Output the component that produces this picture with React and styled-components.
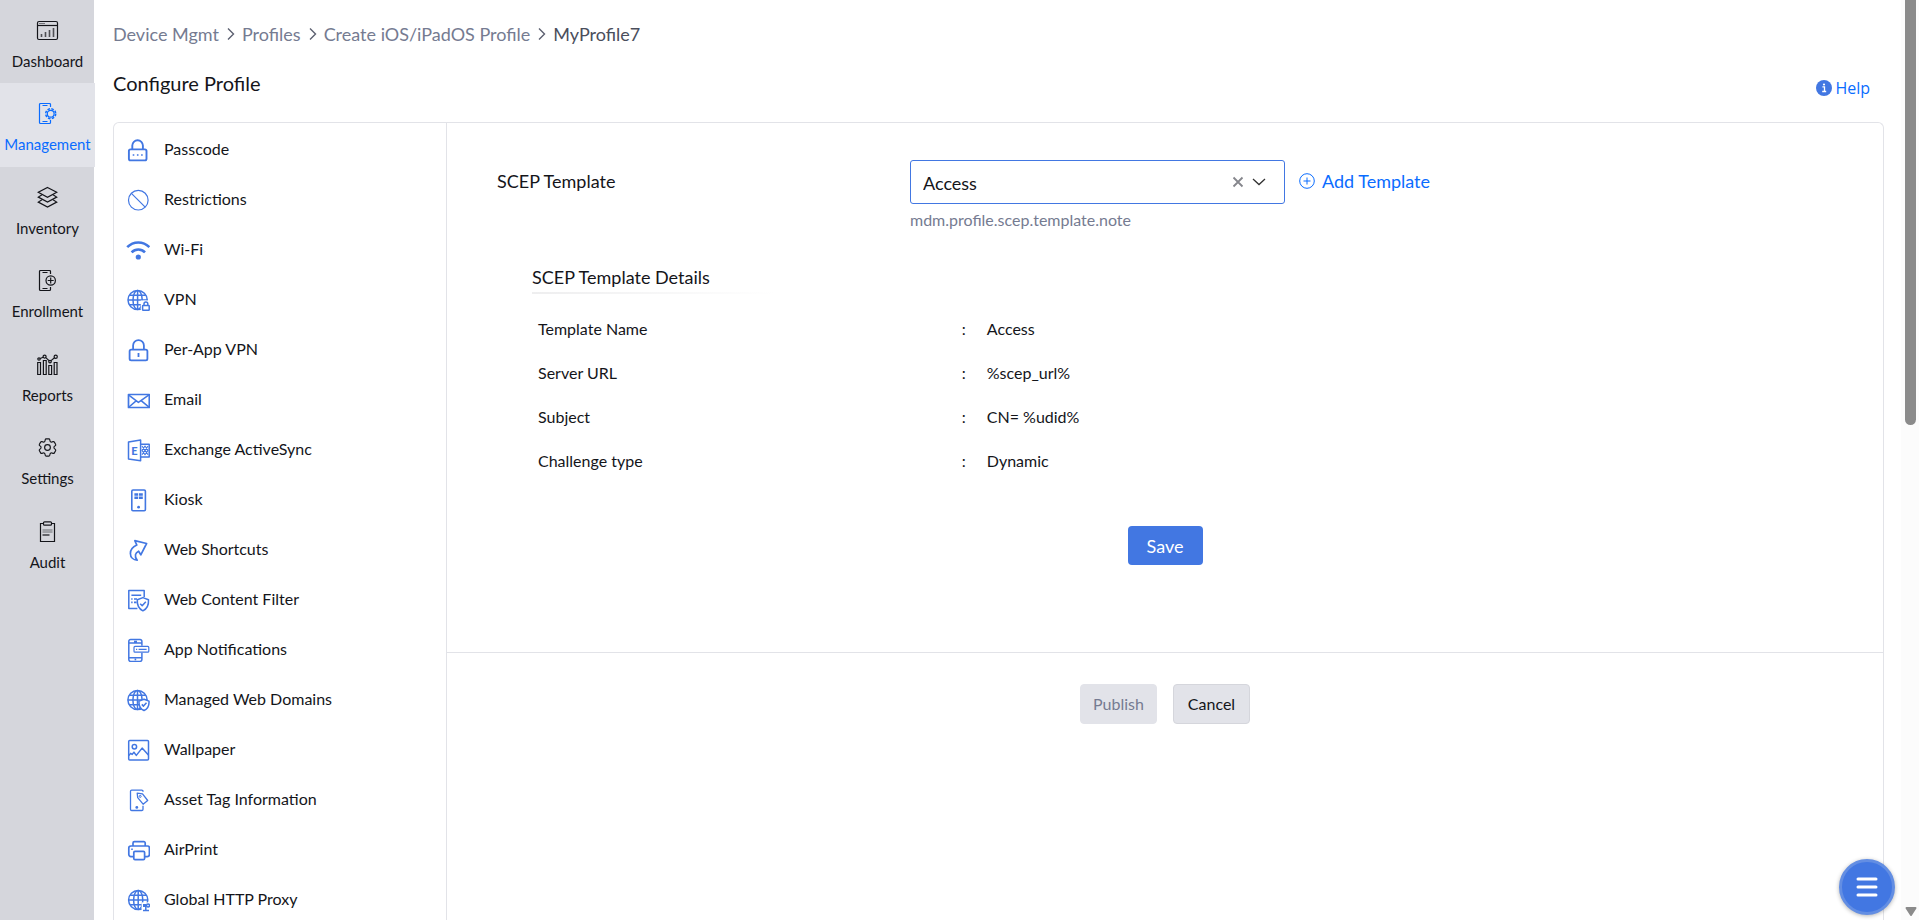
import React, { useState } from "react";
import styled, { createGlobalStyle, css } from "styled-components";
import { HiOutlineCog6Tooth } from "react-icons/hi2";

const color = {
  text: "#14151a",
  muted: "#757b91",
  link: "#0a6cff",
  brand: "#4277e2",
  rail: "#d5d6dc",
  railActive: "#e2e3e9",
  line: "#e2e3e8",
};

const GlobalStyle = createGlobalStyle`
  *, *::before, *::after { box-sizing: border-box; }
  html, body { margin: 0; background: #fff; }
  body {
    font-family: Lato, "Liberation Sans", sans-serif;
    font-size: 16px;
    line-height: 24px;
    color: ${color.text};
  }
  button, select { font: inherit; color: inherit; }
  ul, ol { list-style: none; margin: 0; padding: 0; }
  a { color: inherit; text-decoration: none; }
`;

const Shell = styled.div`
  display: flex;
  height: 100vh;
  overflow: hidden;
`;

/* ---------- left rail ---------- */

const Rail = styled.nav`
  flex: none;
  width: 94px;
  background: ${color.rail};
`;

const RailList = styled.ul`
  display: flex;
  flex-direction: column;
  width: 95px;
  height: 584px;
`;

const RailItem = styled.li`
  flex: 1;
  display: flex;
`;

const RailLink = styled.a`
  flex: 1;
  display: flex;
  flex-direction: column;
  align-items: center;
  gap: 7px;
  padding-top: 19px;
  font-size: 15px;
  ${(p) =>
    p.$active &&
    css`
      background: ${color.railActive};
      color: ${color.link};
    `}
`;

const RailIcon = styled.svg.attrs({ viewBox: "0 0 23 23", "aria-hidden": true })`
  flex: none;
  width: 23px;
  height: 23px;
  fill: none;
  stroke: currentColor;
  stroke-width: 1.2;
`;

const RailGear = styled(HiOutlineCog6Tooth)`
  flex: none;
  width: 23px;
  height: 23px;
  & path { stroke-width: 1.2; }
`;

/* ---------- page ---------- */

const Page = styled.main`
  flex: 1;
  min-width: 0;
  display: flex;
  flex-direction: column;
  padding: 20px 17px 0 19px;
`;

const Breadcrumb = styled.ol`
  display: flex;
  align-items: center;
  gap: 7px;
  height: 27px;
  font-size: 18px;
  color: ${color.muted};
`;

const Crumb = styled.li`
  display: flex;
  align-items: center;
  gap: 7px;
  color: ${(p) => (p.$current ? "#4a4e5c" : "inherit")};
`;

const CrumbArrow = styled.svg`
  width: 9px;
  height: 14px;
  fill: none;
  stroke: #5c6070;
  stroke-width: 1.4;
`;

const TitleRow = styled.header`
  display: flex;
  justify-content: space-between;
  padding: 22px 14px 0 0;
  height: 75px;
`;

const Title = styled.h1`
  margin: 0;
  font-size: 20px;
  line-height: 28px;
  font-weight: 400;
`;

const HelpLink = styled.a`
  display: flex;
  align-items: center;
  gap: 3px;
  height: 38px;
  color: ${color.link};
  font-family: "Open Sans", sans-serif;
`;

const Panel = styled.div`
  flex: 1;
  min-height: 0;
  display: flex;
  border: 1px solid ${color.line};
  border-bottom: 0;
  border-radius: 6px 6px 0 0;
  overflow: hidden;
`;

const PolicyList = styled.ul`
  flex: none;
  width: 333px;
  padding-top: 2px;
  border-right: 1px solid ${color.line};
`;

const PolicyLink = styled.a`
  display: flex;
  align-items: center;
  gap: 14px;
  height: 50px;
  padding-left: 12px;
`;

const PolicyName = styled.span`
  padding-bottom: 2px;
`;

const PolicyIcon = styled.svg.attrs({ viewBox: "0 0 24 24", "aria-hidden": true })`
  flex: none;
  width: 24px;
  height: 24px;
  fill: none;
  stroke: ${color.brand};
  stroke-width: 1.5;
  stroke-linejoin: round;
  & .solid { fill: ${color.brand}; stroke: none; }
  & .cover { fill: #fff; }
`;

const Content = styled.section`
  flex: 1;
  min-width: 0;
`;

const FormArea = styled.form`
  display: flex;
  flex-direction: column;
  height: 530px;
  padding: 37px 0 0 50px;
  border-bottom: 1px solid ${color.line};
`;

const FieldRow = styled.div`
  display: grid;
  grid-template-columns: 413fr 973fr;
`;

const FieldLabel = styled.label`
  padding-top: 9px;
  font-size: 18px;
`;

const FieldLine = styled.div`
  display: flex;
  align-items: center;
  gap: 14px;
`;

const SelectBox = styled.div`
  position: relative;
  width: 375px;
`;

const Select = styled.select`
  appearance: none;
  width: 100%;
  height: 44px;
  padding: 2px 64px 0 12px;
  border: 1px solid ${color.brand};
  border-radius: 3px;
  background: #fff;
  font-size: 18px;
  outline: 0;
`;

const SelectTools = styled.div`
  position: absolute;
  top: 0;
  right: 19px;
  height: 44px;
  display: flex;
  align-items: center;
  gap: 8px;
  pointer-events: none;
`;

const ClearButton = styled.button`
  display: flex;
  padding: 0;
  border: 0;
  background: none;
  color: #85868c;
  pointer-events: auto;
  cursor: pointer;
`;

const AddTemplate = styled.button`
  display: flex;
  align-items: center;
  gap: 7px;
  padding: 0 0 2px;
  border: 0;
  background: none;
  font-size: 18px;
  line-height: 24px;
  color: ${color.link};
  cursor: pointer;
`;

const Note = styled.p`
  margin: 4px 0 0;
  color: ${color.muted};
`;

const Details = styled.section`
  padding: 33px 0 0 35px;
`;

const DetailsTitle = styled.h2`
  margin: 0;
  font-size: 18px;
  line-height: 24px;
  font-weight: 400;
`;

const DetailsRule = styled.div`
  width: 244px;
  height: 2px;
  margin: 3px 0 13px;
  background: linear-gradient(to right, #eeeeef, #fff);
`;

const DetailsTable = styled.table`
  width: 100%;
  border-collapse: collapse;
  table-layout: fixed;
  & th, & td {
    height: 44px;
    padding: 0 0 0 6px;
    font-weight: 400;
    text-align: left;
  }
  & th { width: 31%; }
  & td { padding-left: 11px; }
  & td::before { content: ":"; display: inline-block; width: 25px; }
`;

const Button = styled.button`
  height: 40px;
  border-radius: 4px;
  cursor: pointer;
  ${(p) =>
    p.$primary
      ? css`
          width: 75px;
          height: 39px;
          padding: 0;
          border: 0;
          background: ${color.brand};
          color: #fff;
          font-size: 18px;
        `
      : css`
          width: 77px;
          padding: 0;
          border: 1px solid #d5d6dc;
          background: #e2e3e9;
        `}
  &:disabled {
    border-color: #e2e3e9;
    color: ${color.muted};
    cursor: default;
  }
`;

const ButtonRow = styled.div`
  display: flex;
  justify-content: center;
  gap: 16px;
  padding-top: ${(p) => p.$top}px;
`;

const SaveRow = styled(ButtonRow)`
  margin-left: -50px;
`;

/* ---------- scroll track and floating menu ---------- */

const Track = styled.div`
  flex: none;
  width: 18px;
  display: flex;
  flex-direction: column;
  align-items: center;
  justify-content: space-between;
  padding: 0 3px 3px 4px;
  background: #fcfcfc;
`;

const Thumb = styled.div`
  width: 11px;
  height: 46.3%;
  border-radius: 0 0 6px 6px;
  background: #8b8b8b;
`;

const MenuButton = styled.button`
  position: fixed;
  right: 24px;
  bottom: 5px;
  width: 56px;
  height: 56px;
  display: flex;
  align-items: center;
  justify-content: center;
  padding: 0;
  border: 3px solid #638ee3;
  border-radius: 50%;
  background: ${color.brand};
  box-shadow: 0 1px 4px rgba(0, 0, 0, 0.3);
  cursor: pointer;
`;

const phone = "M14.5 5V2.5a1 1 0 0 0-1-1h-9a1 1 0 0 0-1 1v18a1 1 0 0 0 1 1h9a1 1 0 0 0 1-1V18M6.5 3.5h5M6.5 19.5h5";

const rail = [
  {
    label: "Dashboard",
    icon: (
      <>
        <rect x="1.5" y="2.5" width="20" height="18" rx="1.5" />
        <path d="M1.5 6.5h20" />
        <path d="M3.5 4.5h1M5.5 4.5h1M7.5 4.5h1" />
        <path d="M5.5 18v-3M9.5 18v-5M13.5 18v-7M17.5 18v-9" strokeWidth="1.6" opacity=".7" />
      </>
    ),
  },
  {
    label: "Management",
    icon: (
      <>
        <path d={phone} />
        <circle cx="14.7" cy="11.7" r="3.4" />
        <circle cx="14.7" cy="11.7" r="5" strokeWidth="1.5" strokeDasharray="2.6 1.33" />
      </>
    ),
  },
  {
    label: "Inventory",
    icon: (
      <>
        <path d="M11.5 1.5l9.2 4.8-9.2 4.9-9.2-4.9z" />
        <path d="M17 8.8l3.7 2.3-9.2 5-9.2-5L6 8.8" />
        <path d="M17 13.8l3.7 2.3-9.2 5-9.2-5L6 13.8" />
      </>
    ),
  },
  {
    label: "Enrollment",
    icon: (
      <>
        <path d={phone} />
        <circle cx="14.7" cy="11.5" r="4.7" />
        <path d="M14.7 8.5v6M11.7 11.5h6" />
      </>
    ),
  },
  {
    label: "Reports",
    icon: (
      <>
        <path d="M1.7 9.5h2.8v12H1.7zM7.4 7.5h2.8v14H7.4zM12.8 12.5h2.8v9h-2.8zM18.2 9.5H21v12h-2.8z" />
        <circle cx="3" cy="6" r="1.2" />
        <circle cx="8.6" cy="3.6" r="1.5" />
        <circle cx="14" cy="8.6" r="1.3" />
        <circle cx="19.7" cy="3.8" r="1.6" />
        <path d="M4.1 5.5l3.1-1.3M9.8 4.6l3.2 3M15 7.6l3.5-2.8" />
      </>
    ),
  },
  { label: "Settings", gear: true },
  {
    label: "Audit",
    icon: (
      <>
        <path d="M7.5 3.5h-3v18h14v-18h-3" />
        <rect x="7.5" y="1.8" width="8" height="3.4" rx="1" />
        <path d="M6.5 10h10M6.5 12h10" opacity=".55" />
        <path d="M6.5 15h7" />
      </>
    ),
  },
];

const Globe = ({ cx, r = 9.6 }) => (
  <>
    <circle cx={cx} cy="12" r={r} />
    <ellipse cx={cx} cy="12" rx="4.6" ry={r} />
    <path
      d={`M${cx} ${12 - r}v${2 * r}M${cx - r} 12h${2 * r}M${cx - 8} 7.2h16M${cx - 8} 16.8h16`}
    />
  </>
);

const policies = [
  ["Passcode", (
    <>
      <rect x="2.9" y="11.4" width="17.6" height="11" rx="1.6" strokeWidth="1.9" />
      <path d="M6.3 11V7.6a5.2 5.2 0 0 1 10.6 0V11" strokeWidth="1.9" />
      <path d="M6.7 17h1.6M10.9 17h1.6M15.1 17h1.6" strokeWidth="1.7" />
    </>
  )],
  ["Restrictions", (
    <>
      <circle cx="12.3" cy="12.2" r="9.8" strokeWidth="1.2" />
      <path d="M5.4 5.3l13.8 13.8" strokeWidth="1.2" />
    </>
  )],
  ["Wi-Fi", (
    <>
      <path d="M1.2 9.2C7.4 2.9 17.2 2.9 23.4 9.2" strokeWidth="2.6" />
      <path d="M5.6 14.4c3.8-3.9 9.6-3.9 13.4 0" strokeWidth="2.6" />
      <circle className="solid" cx="12.3" cy="19" r="2.6" />
    </>
  )],
  ["VPN", (
    <>
      <Globe cx={11.6} />
      <path d="M14.8 24V12.4h9V24z" fill="#fff" stroke="none" />
      <rect x="16.6" y="17.5" width="6.6" height="4.8" rx=".6" />
      <path d="M18 17.4v-1.6a1.9 1.9 0 0 1 3.8 0v1.6" />
    </>
  )],
  ["Per-App VPN", (
    <>
      <rect x="3.6" y="11.6" width="17.8" height="10.8" rx="1.6" strokeWidth="1.8" />
      <path d="M7.1 11.4V7.5a5.4 5.4 0 0 1 10.8 0v3.9M12.5 15v4" strokeWidth="1.8" />
    </>
  )],
  ["Email", (
    <>
      <path d="M2.5 6.5h20.8v13H2.5z" strokeWidth="1.7" />
      <path d="M2.5 6.8l9.9 7.6 10.6-7.6M2.7 19.2l7.4-6.3M23 19.2l-7.6-6.3" />
    </>
  )],
  ["Exchange ActiveSync", (
    <>
      <path d="M2.5 4L14.6 2v20.8L2.5 21zM14.6 6.2h8.6v12.9h-8.6" />
      <path d="M16 8l6 8.8M22 8l-6 8.8M19 8l3 4.4-3 4.4-3-4.4z" strokeWidth="1.1" />
      <text x="5.2" y="16.8" fontSize="11" fontWeight="900" fontFamily="Lato" fill={color.brand} stroke="none">E</text>
    </>
  )],
  ["Kiosk", (
    <>
      <rect x="5.8" y="2" width="13.6" height="20.8" rx="1.2" strokeWidth="1.6" />
      <path className="solid" d="M8.4 5.3h3.8v2.4H8.4zM13 5.3h3.8v2.4H13zM8.4 8.6h3.8V11H8.4zM13 8.6h3.8V11H13z" />
      <circle className="solid" cx="12.6" cy="19.2" r="1.4" />
    </>
  )],
  ["Web Shortcuts", (
    <path
      d="M8.8 2.7l11.8 2.8-5.8 11.3-2.2-3.6c-3 1.6-4.8 4.6-1.4 9C7.4 22 4.4 19.4 4.4 15.4c0-3.6 2.4-6.6 6.4-8.4z"
      strokeWidth="1.7"
    />
  )],
  ["Web Content Filter", (
    <>
      <path d="M18.2 9V2.4H2.8v18.2h8.6" />
      <path d="M5.4 7.3h9.8M8 11h3M8 14.4h2.6M5.2 11h1.4M5.2 14.4h1.4" strokeWidth="1.6" />
      <path d="M16.9 9.6l5.6 2.1c.3 5-1.3 9-5.6 11.1-4.3-2.1-5.9-6.1-5.6-11.1z" />
      <path d="M14.2 15.8l2 2 3.6-4" />
    </>
  )],
  ["App Notifications", (
    <>
      <path d="M15.9 7.8V3.4a1.8 1.8 0 0 0-1.8-1.8H4.6a1.8 1.8 0 0 0-1.8 1.8v18.2a1.8 1.8 0 0 0 1.8 1.8h9.5a1.8 1.8 0 0 0 1.8-1.8v-6.8M2.8 5h13M2.8 19.8h13M8 3.4h3M8.6 21.6h1.6" />
      <rect x="8" y="8.4" width="14.8" height="5.8" rx="1" strokeWidth="1.2" />
      <path d="M10 11.3h1.2M12.6 11.3h8" strokeWidth="1.2" />
    </>
  )],
  ["Managed Web Domains", (
    <>
      <Globe cx={11.5} />
      <path d="M18 11.2l5 1.9c.3 4.3-1.2 7.6-5 9.4-3.8-1.8-5.3-5.1-5-9.4z" className="cover" />
      <path d="M15.8 16.4l1.7 1.7 3-3.3" />
    </>
  )],
  ["Wallpaper", (
    <>
      <rect x="2.7" y="2.6" width="19.8" height="19.4" rx="1" />
      <circle cx="8.4" cy="8.7" r="2.2" />
      <path d="M2.8 17.6l1.8-2.2 1.6 1 1.7-2.2 2.4 3.2 5.8-7.3 6.3 7" />
    </>
  )],
  ["Asset Tag Information", (
    <>
      <path d="M17 3.8V3.2c0-.7-.5-1.1-1.2-1.1H5.7c-.7 0-1.2.5-1.2 1.2v18c0 .7.5 1.2 1.2 1.2h10.1c.7 0 1.2-.5 1.2-1.2v-3.5" strokeWidth="1.3" />
      <path d="M11.2 5.2l5.3.6 5.2 6.7-4.6 3.7-5.4-6.6z" strokeWidth="1.3" />
      <circle cx="14.2" cy="8.4" r="1" strokeWidth="1" />
      <circle className="solid" cx="10.8" cy="19.4" r="1.4" />
    </>
  )],
  ["AirPrint", (
    <>
      <path d="M7.7 18.6H4.8a2 2 0 0 1-2-2V10a2 2 0 0 1 2-2h16.6a2 2 0 0 1 2 2v6.6a2 2 0 0 1-2 2h-2.9M7 8V5a1.4 1.4 0 0 1 1.4-1.4h9.4A1.4 1.4 0 0 1 19.2 5v3" strokeWidth="1.7" />
      <rect x="7.8" y="13.4" width="10.8" height="8.2" rx="1.2" strokeWidth="1.7" />
      <path d="M5.2 11.2h1.6" />
    </>
  )],
  ["Global HTTP Proxy", (
    <>
      <Globe cx={12.2} />
      <path d="M15.6 14.4h9V24h-9z" fill="#fff" stroke="none" />
      <rect x="17" y="16" width="3" height="3" className="solid" />
      <circle cx="22" cy="17.4" r="1.5" />
      <path d="M19.8 19v3.4M17 22.4h6" />
    </>
  )],
];

const details = [
  ["Template Name", "Access"],
  ["Server URL", "%scep_url%"],
  ["Subject", "CN= %udid%"],
  ["Challenge type", "Dynamic"],
];

const crumbs = ["Device Mgmt", "Profiles", "Create iOS/iPadOS Profile", "MyProfile7"];

export default function App() {
  const [template, setTemplate] = useState("Access");

  return (
    <>
      <GlobalStyle />
      <Shell>
        <Rail aria-label="Main">
          <RailList>
            {rail.map((item) => (
              <RailItem key={item.label}>
                <RailLink href="#" $active={item.label === "Management"}>
                  {item.gear ? <RailGear aria-hidden="true" /> : <RailIcon>{item.icon}</RailIcon>}
                  {item.label}
                </RailLink>
              </RailItem>
            ))}
          </RailList>
        </Rail>

        <Page>
          <Breadcrumb>
            {crumbs.map((name, i) => {
              const last = i === crumbs.length - 1;
              return (
                <Crumb key={name} $current={last}>
                  {last ? name : <a href="#">{name}</a>}
                  {!last && (
                    <CrumbArrow viewBox="0 0 9 14" aria-hidden="true">
                      <path d="M2 1.5L7.5 7 2 12.5" />
                    </CrumbArrow>
                  )}
                </Crumb>
              );
            })}
          </Breadcrumb>

          <TitleRow>
            <Title>Configure Profile</Title>
            <HelpLink href="#">
              <svg width="16" height="16" viewBox="0 0 16 16" aria-hidden="true">
                <circle cx="8" cy="8" r="8" fill={color.brand} />
                <path d="M6.4 6.8h2.1v4.6M6.2 11.5h4" stroke="#fff" strokeWidth="1.3" fill="none" />
                <circle cx="8" cy="4.5" r="1.1" fill="#fff" />
              </svg>
              Help
            </HelpLink>
          </TitleRow>

          <Panel>
            <PolicyList>
              {policies.map(([name, art]) => (
                <li key={name}>
                  <PolicyLink href="#">
                    <PolicyIcon>{art}</PolicyIcon>
                    <PolicyName>{name}</PolicyName>
                  </PolicyLink>
                </li>
              ))}
            </PolicyList>

            <Content>
              <FormArea onSubmit={(e) => e.preventDefault()}>
                <FieldRow>
                  <FieldLabel htmlFor="template">SCEP Template</FieldLabel>
                  <div>
                    <FieldLine>
                      <SelectBox>
                        <Select id="template" value={template} onChange={(e) => setTemplate(e.target.value)}>
                          <option value=""></option>
                          <option value="Access">Access</option>
                        </Select>
                        <SelectTools>
                          <ClearButton type="button" aria-label="Clear" onClick={() => setTemplate("")}>
                            <svg width="12" height="12" viewBox="0 0 12 12" aria-hidden="true">
                              <path d="M1.5 1.5l9 9M10.5 1.5l-9 9" stroke="currentColor" strokeWidth="1.8" />
                            </svg>
                          </ClearButton>
                          <svg width="14" height="14" viewBox="0 0 14 14" aria-hidden="true">
                            <path d="M1 4l6 5.5L13 4" stroke="#333" strokeWidth="1.3" fill="none" />
                          </svg>
                        </SelectTools>
                      </SelectBox>
                      <AddTemplate type="button">
                        <svg width="16" height="16" viewBox="0 0 16 16" fill="none" stroke="currentColor" aria-hidden="true">
                          <circle cx="8" cy="8" r="7.3" />
                          <path d="M8 4.5v7M4.5 8h7" />
                        </svg>
                        Add Template
                      </AddTemplate>
                    </FieldLine>
                    <Note>mdm.profile.scep.template.note</Note>
                  </div>
                </FieldRow>

                <Details>
                  <DetailsTitle>SCEP Template Details</DetailsTitle>
                  <DetailsRule />
                  <DetailsTable>
                    <tbody>
                      {details.map(([name, value]) => (
                        <tr key={name}>
                          <th scope="row">{name}</th>
                          <td>{value}</td>
                        </tr>
                      ))}
                    </tbody>
                  </DetailsTable>
                </Details>

                <SaveRow $top={43}>
                  <Button type="submit" $primary>Save</Button>
                </SaveRow>
              </FormArea>

              <ButtonRow $top={31}>
                <Button type="button" disabled>Publish</Button>
                <Button type="button">Cancel</Button>
              </ButtonRow>
            </Content>
          </Panel>
        </Page>

        <Track aria-hidden="true">
          <Thumb />
          <svg width="12" height="10" viewBox="0 0 12 10">
            <path d="M1.5 1h9L6 8z" fill="#8b8b8b" stroke="#8b8b8b" strokeWidth="2" strokeLinejoin="round" />
          </svg>
        </Track>
      </Shell>

      <MenuButton type="button" aria-label="Menu">
        <svg width="22" height="20" viewBox="0 0 22 20" stroke="#fff" strokeWidth="3" strokeLinecap="round" aria-hidden="true">
          <path d="M2 2h18M2 10h18M2 18h18" />
        </svg>
      </MenuButton>
    </>
  );
}
